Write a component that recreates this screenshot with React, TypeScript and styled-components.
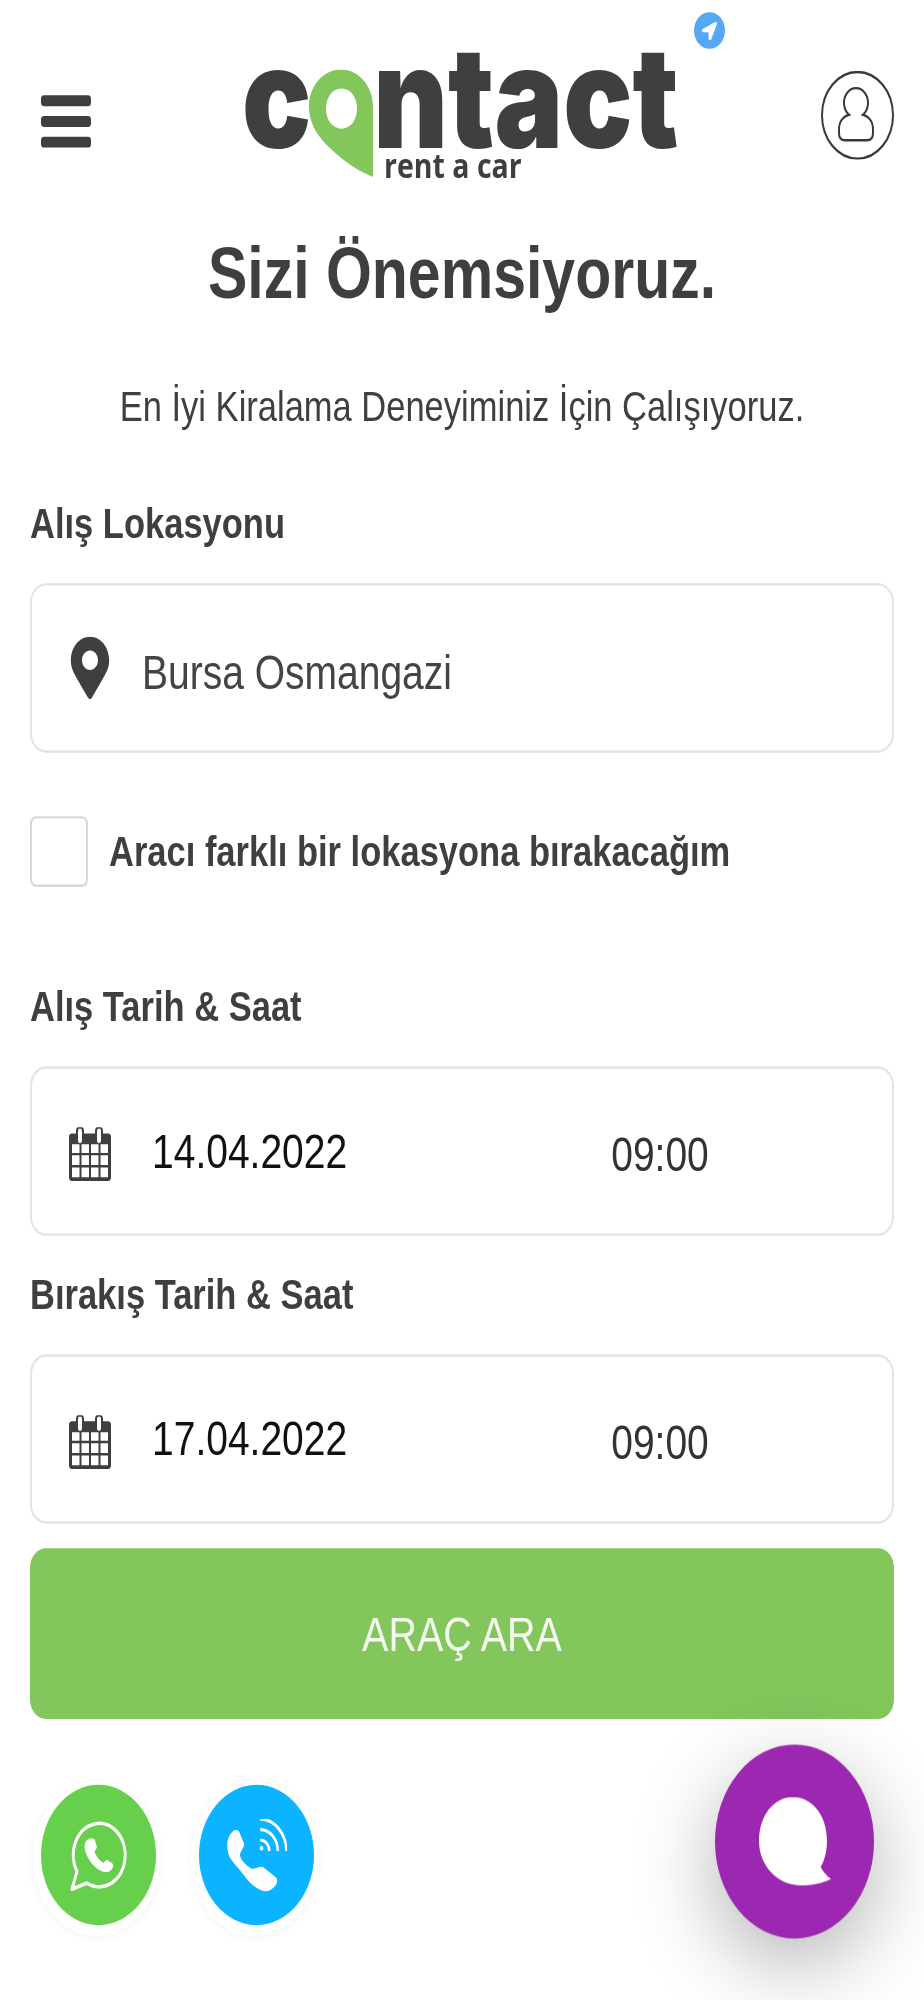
import styled, { createGlobalStyle } from "styled-components";
import { FaMapMarkerAlt, FaLocationArrow } from "react-icons/fa";

const GlobalStyle = createGlobalStyle`
  html, body {
    margin: 0;
    background: #fff;
  }
  body {
    height: 2000px;
  }
`;

function CalendarIcon() {
  return (
    <CalendarSvg viewBox="0 0 42 44">
      <path
        fill="#3f3f3f"
        fillRule="evenodd"
        d="M3 5h4V3a4 4 0 0 1 8 0v2h11V3a4 4 0 0 1 8 0v2h5a3 3 0 0 1 3 3v33a3 3 0 0 1-3 3H3a3 3 0 0 1-3-3V8a3 3 0 0 1 3-3zM9 3v8a2 2 0 0 0 4 0V3a2 2 0 0 0-4 0zm19 0v8a2 2 0 0 0 4 0V3a2 2 0 0 0-4 0zM3 14v7h7.500v-7zm9.500 0v7h7.500v-7zm9.500 0v7h7.500v-7zm9.500 0v7h7.500v-7zM3 23v8h7.500v-8zm9.500 0v8h7.500v-8zm9.500 0v8h7.500v-8zm9.500 0v8h7.500v-8zM3 33v8h7.500v-8zm9.500 0v8h7.500v-8zm9.500 0v8h7.500v-8zm9.500 0v8h7.500v-8z"
      />
    </CalendarSvg>
  );
}

function WhatsappIcon() {
  return (
    <svg viewBox="0 0 58 60" width="58" height="60">
      <path
        fill="none"
        stroke="#fff"
        strokeWidth="3"
        strokeLinejoin="round"
        d="M2 57.500 7 43A26 26 0 1 1 17 52.500z"
      />
      <path
        fill="#fff"
        d="M19 16l4 0c1 0 2 1 2.500 3l1.500 4c0 1-2 3-2.500 4 2 4 5 7 9 9 1-1 3-3 4-2.500l5 3c1 1 1 2 0 3.500-1 3-5 4-8 3.500-10-2-19-12-20-21 0-3 2-6 4-6z"
      />
    </svg>
  );
}

function PhoneIcon() {
  return (
    <svg viewBox="0 0 60 60" width="60" height="60">
      <path
        fill="#fff"
        d="M6 10C9 8 12 9 13 12L17 20C18 23 13 26 13 30 14 34 19 38 24 40.500 28 42 33 37 37 40L49 48C51 50 50 53 48 55 45 58 41 60 37 59 30 58 22 52 17 46 10 39 4 34 2 30-.5 24-1 15 6 10z"
      />
      <g fill="none" stroke="#fff" strokeWidth="2.500">
        <path d="M33.300.2a26 26 0 0 1 26 26" />
        <path d="M33.300 8.700a17.500 17.500 0 0 1 17.500 17.500" />
        <path d="M33.300 17.200a9 9 0 0 1 9 9" />
      </g>
      <circle cx="34.500" cy="24" r="1.800" fill="#fff" />
    </svg>
  );
}

function DateField({ date }: { date: string }) {
  return (
    <Field>
      <CalendarIcon />
      <DateText>{date}</DateText>
      <TimeText>09:00</TimeText>
    </Field>
  );
}

export default function App() {
  return (
    <>
      <GlobalStyle />
      <Stage>
        <Header>
          <Burger>
            <span />
            <span />
            <span />
          </Burger>
          <Logo>
            <LogoWord>c</LogoWord>
            <PinSvg viewBox="0 0 64 89">
              <path
                fill="#82c65c"
                fillRule="evenodd"
                d="M32 0C14 0 0 14 0 30 0 42 6 52 18 62 30 72 46 82 64 88V30C64 14 50 0 32 0zM32.500 15.500c-9 0-15.500 7-15.500 16.500s6.500 16.500 15.500 16.500 15.500-7 15.500-16.500-6.500-16.500-15.500-16.500z"
              />
            </PinSvg>
            <LogoWord>ntact</LogoWord>
            <LogoTag>rent a car</LogoTag>
            <LogoBadge>
              <FaLocationArrow />
            </LogoBadge>
          </Logo>
          <UserButton viewBox="0 0 73 73">
            <circle cx="36.500" cy="36.500" r="35.500" />
            <path d="M28 36a12 12 0 1 1 14 0c5 1 10 5 10 12v3c0 4-2 6-6 6H24c-4 0-6-2-6-6v-3c0-7 5-11 10-12z" />
          </UserButton>
        </Header>

        <Main>
          <Title>Sizi Önemsiyoruz.</Title>
          <Subtitle>En İyi Kiralama Deneyiminiz İçin Çalışıyoruz.</Subtitle>

          <Label $top={61}>Alış Lokasyonu</Label>
          <Field>
            <PinIcon>
              <FaMapMarkerAlt />
            </PinIcon>
            <LocationText>Bursa Osmangazi</LocationText>
          </Field>

          <CheckRow>
            <CheckBox />
            <CheckLabel>Aracı farklı bir lokasyona bırakacağım</CheckLabel>
          </CheckRow>

          <Label $top={83}>Alış Tarih &amp; Saat</Label>
          <DateField date="14.04.2022" />

          <Label $top={33}>Bırakış Tarih &amp; Saat</Label>
          <DateField date="17.04.2022" />

          <SearchButton>ARAÇ ARA</SearchButton>

          <Footer>
            <ContactGroup>
              <RoundLink $bg="#66d04d">
                <WhatsappIcon />
              </RoundLink>
              <RoundLink $bg="#0cb4ff">
                <PhoneIcon />
              </RoundLink>
            </ContactGroup>
            <ChatBubble>
              <svg viewBox="0 0 72 73" width="72" height="73">
                <path
                  fill="#fff"
                  d="M34 0C53 0 68 15 68 35.500 68 44 66 51 61.700 57.400 64 61 68 65 72 67 63 71 52 72.400 42 72.400 18 72.400 0 56 0 36 0 15 15 0 34 0z"
                />
              </svg>
            </ChatBubble>
          </Footer>
        </Main>
      </Stage>
    </>
  );
}

const Stage = styled.div`
  width: 924px;
  height: 1639px;
  transform: scale(1, 1.22);
  transform-origin: top left;
  font-family: "Liberation Sans", Arial, sans-serif;
  color: #3f3f3f;
`;

const Header = styled.header`
  height: 194px;
  display: flex;
  align-items: flex-start;
  padding: 0 30px 0 41px;
  box-sizing: border-box;
`;

const Burger = styled.div`
  width: 50px;
  margin-top: 78px;
  display: flex;
  flex-direction: column;
  gap: 8px;

  span {
    height: 9px;
    border-radius: 3px;
    background: #3f3f3f;
  }
`;

const Logo = styled.div`
  position: relative;
  margin: 26px 0 0 151px;
  display: flex;
  align-items: flex-start;
  height: 120px;
  width: 436px;
`;

const LogoWord = styled.span`
  margin-top: 9px;
  font-family: Inter, sans-serif;
  font-weight: 900;
  font-size: 115px;
  line-height: 90px;
  color: #3f3f3f;
`;

const PinSvg = styled.svg`
  width: 64px;
  height: 89px;
  margin: 31px 0 0 -2px;
  flex: none;
`;

const LogoTag = styled.span`
  position: absolute;
  left: 142px;
  top: 99px;
  font-family: "Open Sans", sans-serif;
  font-weight: 700;
  font-size: 28.500px;
  line-height: 20px;
  color: #3f3f3f;
  white-space: nowrap;
`;

const LogoBadge = styled.span`
  position: absolute;
  left: 452px;
  top: -16px;
  width: 31px;
  height: 30px;
  border-radius: 50%;
  background: #55a8f5;
  color: #fff;
  display: flex;
  align-items: center;
  justify-content: center;
  font-size: 15px;
`;

const UserButton = styled.svg`
  width: 73px;
  height: 73px;
  margin: 58px 0 0 auto;
  fill: none;
  stroke: #3a3a3a;
  stroke-width: 2;
`;

const Main = styled.main`
  padding: 0 30px;
`;

const Title = styled.h1`
  margin: 0;
  font-size: 59px;
  line-height: 60px;
  font-weight: 700;
  text-align: center;
  color: #3f3f3f;
`;

const Subtitle = styled.p`
  margin: 59px 0 0;
  font-size: 34.500px;
  line-height: 40px;
  text-align: center;
  color: #3f3f3f;
`;

const Label = styled.div<{ $top: number }>`
  margin: ${(p) => p.$top}px 0 34px;
  font-size: 34.500px;
  line-height: 30px;
  font-weight: 700;
  color: #3f3f3f;
`;

const Field = styled.div`
  height: 139px;
  box-sizing: border-box;
  display: flex;
  align-items: center;
  background: #fff;
  border: 2px solid #e4e4e4;
  border-radius: 16px;
  padding-left: 37px;
`;

const PinIcon = styled.span`
  display: flex;
  width: 42px;
  font-size: 51px;
  color: #3f3f3f;
`;

const LocationText = styled.span`
  margin: 8px 0 0 31px;
  font-size: 39px;
  color: #444;
`;

const CalendarSvg = styled.svg`
  width: 42px;
  height: 44px;
  margin-top: 5px;
  flex: none;
`;

const DateText = styled.span`
  margin: 1px 0 0 41px;
  font-size: 39px;
  color: #111;
`;

const TimeText = styled.span`
  margin: 7px 0 0 264px;
  font-size: 39px;
  color: #333;
`;

const CheckRow = styled.div`
  margin-top: 52px;
  height: 58px;
  display: flex;
  align-items: center;
`;

const CheckBox = styled.span`
  width: 58px;
  height: 58px;
  box-sizing: border-box;
  border: 2px solid #d8d8d8;
  border-radius: 6px;
  flex: none;
`;

const CheckLabel = styled.span`
  margin-left: 21px;
  font-size: 34.500px;
  font-weight: 700;
  color: #3f3f3f;
`;

const SearchButton = styled.button`
  display: block;
  width: 100%;
  height: 140px;
  margin-top: 20px;
  border: 0;
  border-radius: 16px;
  background: #82c65c;
  color: #f4faef;
  font-family: inherit;
  font-size: 39.500px;
`;

const Footer = styled.footer`
  margin-top: 20px;
  height: 160px;
  padding: 0 20px 0 11px;
  display: flex;
  align-items: center;
  justify-content: space-between;
`;

const ContactGroup = styled.div`
  display: flex;
  gap: 43px;
  margin-top: 23px;
`;

const RoundLink = styled.a<{ $bg: string }>`
  width: 115px;
  height: 115px;
  border-radius: 50%;
  background: ${(p) => p.$bg};
  display: flex;
  align-items: center;
  justify-content: center;
  box-shadow: -2px 3px 0 6px #fff, -2px 4px 8px 6px rgba(0, 0, 0, 0.05);
`;

const ChatBubble = styled.div`
  width: 159px;
  height: 159px;
  border-radius: 50%;
  background: #9c27b0;
  display: flex;
  align-items: center;
  justify-content: center;
  box-shadow: 0 22px 75px rgba(0, 0, 0, 0.3);
`;
